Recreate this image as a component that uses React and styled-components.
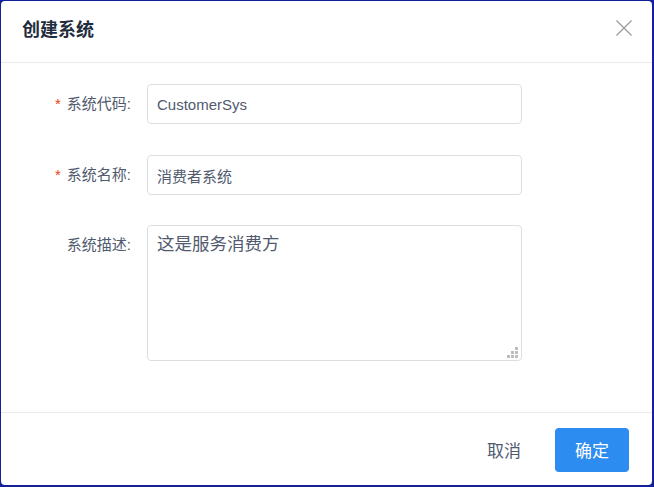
import React, { useState } from 'react';
import styled, { createGlobalStyle } from 'styled-components';

const GlobalStyle = createGlobalStyle`
  html, body {
    margin: 0;
    padding: 0;
    height: 100%;
    background: #13229a;
  }
  #root {
    height: 100%;
  }
  * {
    box-sizing: border-box;
  }
`;

const Dialog = styled.div`
  display: flex;
  flex-direction: column;
  height: 484px;
  margin: 1px 2px 0 1px;
  background: #fff;
  border-radius: 4px;
  font-family: "Liberation Sans", "Noto Sans CJK SC", sans-serif;
  overflow: hidden;
`;

const Header = styled.div`
  display: flex;
  align-items: center;
  justify-content: space-between;
  height: 62px;
  padding: 0 20px 7px 21px;
  border-bottom: 1px solid #e8eaec;
`;

const Title = styled.h2`
  margin: 0;
  font-size: 18px;
  font-weight: 700;
  color: #1f2d3d;
`;

const CloseButton = styled.button`
  display: flex;
  align-items: center;
  justify-content: center;
  width: 16px;
  height: 16px;
  padding: 0;
  border: none;
  background: none;
  cursor: pointer;
`;

const Body = styled.div`
  flex: 1;
  padding: 21px 0 0 0;
`;

const Row = styled.div`
  display: grid;
  grid-template-columns: 130px 375px;
  column-gap: 16px;
  margin-bottom: ${(p) => (p.tight ? '30px' : '31px')};
  align-items: ${(p) => (p.top ? 'start' : 'center')};
`;

const Label = styled.label`
  text-align: right;
  font-size: 15px;
  line-height: 40px;
  color: #515a6e;
`;

const Star = styled.span`
  color: #ed4014;
  margin-right: 6px;
  font-size: 15px;
`;

const Input = styled.input`
  height: 40px;
  width: 100%;
  padding: 0 9px;
  border: 1px solid #dcdee2;
  border-radius: 4px;
  font-family: "Liberation Sans", "Noto Sans CJK SC", sans-serif;
  font-size: 15px;
  color: #515a6e;
  outline: none;
`;

const AreaWrap = styled.div`
  position: relative;
  height: 136px;
`;

const TextArea = styled.textarea`
  display: block;
  width: 100%;
  height: 100%;
  padding: 5px 9px;
  border: 1px solid #dcdee2;
  border-radius: 4px;
  font-family: "Liberation Sans", "Noto Sans CJK SC", sans-serif;
  font-size: 17.5px;
  line-height: 26px;
  color: #515a6e;
  resize: none;
  outline: none;
`;

const Grip = styled.div`
  position: absolute;
  right: 4px;
  bottom: 3px;
  display: grid;
  grid-template-columns: repeat(3, 3px);
  grid-template-rows: repeat(3, 3px);
  gap: 1px;
  pointer-events: none;
`;

const Dot = styled.span`
  background: ${(p) => (p.on ? '#bdbdbd' : 'transparent')};
`;

const Footer = styled.div`
  display: flex;
  align-items: center;
  justify-content: flex-end;
  gap: 18px;
  height: 73px;
  padding: 1px 23px 0 0;
  border-top: 1px solid #e8eaec;
`;

const Button = styled.button`
  height: 44px;
  padding: 0 ${(p) => (p.primary ? '20px' : '16px')};
  border: none;
  border-radius: 4px;
  background: ${(p) => (p.primary ? '#2d8cf0' : 'transparent')};
  color: ${(p) => (p.primary ? '#fff' : '#515a6e')};
  font-family: "Liberation Sans", "Noto Sans CJK SC", sans-serif;
  font-size: 17px;
  cursor: pointer;
`;

const gripPattern = [0, 0, 1, 0, 1, 1, 1, 1, 1];

const App = () => {
  const [code, setcode] = useState('CustomerSys');
  const [name, setname] = useState('消费者系统');
  const [desc, setdesc] = useState('这是服务消费方');

  return (
    <>
      <GlobalStyle />
      <Dialog>
        <Header>
          <Title>创建系统</Title>
          <CloseButton aria-label="关闭">
            <svg width="16" height="16" viewBox="0 0 16 16">
              <path d="M0.5 0.5L15.5 15.5M15.5 0.5L0.5 15.5" stroke="#999" strokeWidth="1.3" fill="none" />
            </svg>
          </CloseButton>
        </Header>
        <Body>
          <Row>
            <Label><Star>*</Star>系统代码:</Label>
            <Input value={code} onChange={(e) => setcode(e.target.value)} />
          </Row>
          <Row tight>
            <Label><Star>*</Star>系统名称:</Label>
            <Input value={name} onChange={(e) => setname(e.target.value)} />
          </Row>
          <Row top>
            <Label>系统描述:</Label>
            <AreaWrap>
              <TextArea value={desc} onChange={(e) => setdesc(e.target.value)} />
              <Grip>
                {gripPattern.map((on, i) => <Dot key={i} on={on ? 1 : 0} />)}
              </Grip>
            </AreaWrap>
          </Row>
        </Body>
        <Footer>
          <Button>取消</Button>
          <Button primary>确定</Button>
        </Footer>
      </Dialog>
    </>
  );
};

export default App;
